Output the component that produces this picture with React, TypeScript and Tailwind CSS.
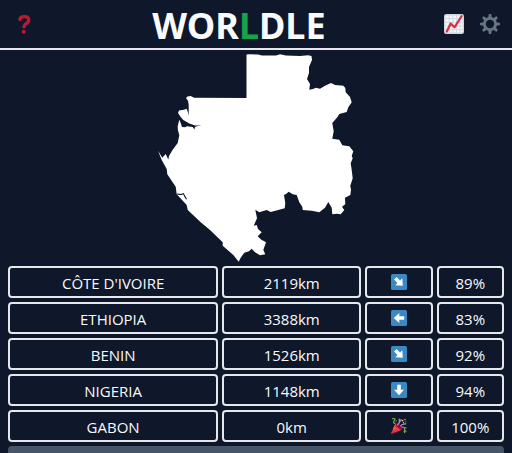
import React from "react";

type Hint = "southeast" | "west" | "south" | "found";

interface Guess {
  country: string;
  distance: string;
  hint: Hint;
  proximity: string;
}

const guesses: Guess[] = [
  { country: "CÔTE D'IVOIRE", distance: "2119km", hint: "southeast", proximity: "89%" },
  { country: "ETHIOPIA", distance: "3388km", hint: "west", proximity: "83%" },
  { country: "BENIN", distance: "1526km", hint: "southeast", proximity: "92%" },
  { country: "NIGERIA", distance: "1148km", hint: "south", proximity: "94%" },
  { country: "GABON", distance: "0km", hint: "found", proximity: "100%" },
];

const rotation = { south: 0, west: 90, southeast: -45 };

function QuestionIcon() {
  return (
    <svg viewBox="0 0 20 20" className="size-5" aria-hidden="true">
      <path
        d="M5.900 5.300C6.300 3.300 8 2.600 10.200 2.600c2.700 0 4.600 1.300 4.600 3.500 0 3.600-4.800 3.100-4.800 6.600"
        fill="none"
        stroke="#be1931"
        strokeWidth="3.400"
        strokeLinecap="round"
      />
      <circle cx="9.700" cy="17.700" r="2" fill="#be1931" />
    </svg>
  );
}

function ChartIcon() {
  return (
    <svg viewBox="0 0 36 36" className="size-5" aria-hidden="true">
      <rect width="36" height="36" rx="4" fill="#ccd6dd" />
      <rect x="2.5" y="2.5" width="31" height="31" rx="1" fill="#f5f8fa" />
      <path
        d="M9.500 2v32M16 2v32M22.500 2v32M29 2v32M2 8.500h32M2 15h32M2 21.500h32M2 28h32"
        stroke="#ccd6dd"
        strokeWidth="1.600"
      />
      <path
        d="M5 31.500L12 17l7 7L31.500 4"
        fill="none"
        stroke="#dd2e44"
        strokeWidth="4"
        strokeLinecap="round"
        strokeLinejoin="round"
      />
    </svg>
  );
}

function GearIcon() {
  return (
    <svg viewBox="0 0 20 20" className="size-5" fill="none" stroke="#66757f" aria-hidden="true">
      <circle cx="10" cy="10" r="5.600" strokeWidth="2.800" />
      {[0, 45, 90, 135, 180, 225, 270, 315].map((angle) => (
        <path
          key={angle}
          d="M8.200 3.900L8.700.6Q8.800 0 9.400 0h1.200q.6 0 .7.600l.5 3.300z"
          fill="#66757f"
          stroke="none"
          transform={`rotate(${angle} 10 10)`}
        />
      ))}
    </svg>
  );
}

function ArrowIcon({ angle, label }: { angle: number; label: string }) {
  return (
    <svg viewBox="0 0 16 16" className="size-4" role="img" aria-label={label}>
      <rect width="16" height="16" rx="1.500" fill="#3b88c3" />
      <path
        d="M6.200 2.800h3.600v4.900h3.200L8 13.300 3 7.700h3.200z"
        fill="#fff"
        transform={`rotate(${angle} 8 8)`}
      />
    </svg>
  );
}

function PartyIcon() {
  return (
    <svg viewBox="0 0 16 16" className="size-4" role="img" aria-label="found" fill="none">
      <path d="M4.800 4.800L0 15.200q.1.800.900.600L11.600 11.600z" fill="#dd2e44" />
      <path d="M4.600 6.500L2.200 11l3.200 3M3.400 8.800l5 3.700" stroke="#ea596e" strokeWidth="1" />
      <ellipse cx="8.100" cy="8.200" rx="1.700" ry="4.400" fill="#a0041e" transform="rotate(-43 8.100 8.200)" />
      <path d="M1.200.9C3.800-.2 4.600 1.200 3.300 2.700c-1 1.200-1 2 .8 2.900" stroke="#77b255" strokeWidth="1.200" />
      <path d="M6.300 7.200c2-1.300 2.800-3.100 1.800-6.400M8.500 4l2-2.600" stroke="#aa8dd8" strokeWidth="1.400" />
      <path d="M9.400 8.400c1-2 3-2.600 5.900-2.500" stroke="#aa8dd8" strokeWidth="1.200" />
      <path d="M10.500 9.300c2-.6 3.200-.2 3 1.700-.1 1.800.5 2.500 2.100 2M13.600 10.300l1.800-.8M12.800 13l1.200 2" stroke="#77b255" strokeWidth="1.200" />
      <g fill="#ffcc4d">
        <circle cx="11.600" cy="2.600" r=".9" />
        <circle cx="14" cy="1.500" r=".7" />
        <circle cx="12.500" cy="4.700" r=".7" />
        <circle cx="5.200" cy="3" r=".6" />
        <circle cx="3.800" cy="10.200" r=".5" />
      </g>
      <circle cx="14.800" cy="3.800" r=".7" fill="#5c913b" />
    </svg>
  );
}

const northEast =
  "246.5,54.5 250,54.3 258,54.5 262,55.5 276,55.5 280,54.2 286,55.5 300,56 308,55.3 311.5,56 312,60 309,67 309,73 307,79 310,84 309.3,89.7 313,89 316,87.7 320,88.7 325,85.7 331,83 335,85 343.3,85.7 345.3,88 345.7,92.3 350,97 351.7,102.3 348.3,107.3 346.7,112 339.3,114 337.3,117.3 332.3,123 333.7,131.3 332.3,138.7 339.3,139.7 342.3,145.3 349.3,146.3 353.3,151.3 351.7,156";
const southEast =
  "352.7,158.3 350.7,163.3 351.7,170 352.7,178.3 350.3,185.7 351,190 350.3,195 345,197.7 345.3,204.3 342,206.7 344.3,210 340.7,214.3 337,213.7 332.3,214.3 331.7,207.7 328.3,202 325,207.7 319.3,212.3 311.7,210.7 302.7,210 302.3,206.7 299.3,202.3 296.7,195 292.7,194.3 288.7,191.7 286,194 284,195 285.3,203.3 284.7,208.3 270.7,212 266.7,210 259.3,212.3 255.3,209.7 257,218.3 253.7,225.7 256.7,225 258,229 261.7,232.3 257.7,236.3 261,239.5 266,242.3 263.3,250 265.3,254.3 260,255.3 255,252.3 251.7,248.7";
const southWest =
  "249,251.3 244.3,252.7 240.7,257.7 238.7,261.7 233.3,255 222.7,245.7 222.7,242.3 210,230 200.7,222.3 187.7,210 186.7,205 176.7,194.3 175.7,186.7 167.3,174.3 166.7,169 161.7,160 158,150.7 162.3,157.7 165.7,154 168.3,159.5 169,156 172.7,149.7 177.7,143 179.3,135.3 177.9,130 177.7,126.3 179.3,119.7 180.7,123";
const northWest =
  "182,127 185,127.3 187,126.2 192.7,127 194.3,129.5 195,127 196.7,126.3 201.5,125.5 195,125.5 189.3,123.5 183.3,120 180.7,117 178,113 179,110.5 184,109.7 186.5,108.7 187.5,111 188.7,115 188.7,104.7 188,100.7 186,98 187.5,96.5 190.7,96 194,97.7 246.5,98";

function CountryShape() {
  return (
    <svg viewBox="156 50 200 212" className="h-[212px] w-[200px]" role="img" aria-label="Country outline">
      <polygon fill="#fff" points={`${northEast} ${southEast} ${southWest} ${northWest}`} />
      <path d="M177 194l4 .6 2.500-1 1 2.300 2 3.300" fill="none" stroke="#0f172a" strokeWidth="1.100" />
    </svg>
  );
}

const cell = "flex h-8 items-center justify-center rounded border-2 border-gray-200";
const textCell = `${cell} pt-0.5`;

export default function App() {
  return (
    <div className="flex h-screen flex-col overflow-hidden bg-[#0f172a] font-['Open_Sans','Noto_Sans',sans-serif] text-[15px] text-slate-50">
      <header className="flex h-[50px] shrink-0 items-center justify-between border-b-2 border-gray-200 pr-3 pl-3.5">
        <button type="button" aria-label="How to play">
          <QuestionIcon />
        </button>
        <h1 className="mt-1 font-['Noto_Sans',sans-serif] text-4xl leading-10 font-bold">
          WOR<span className="text-[#16a34a]">L</span>DLE
        </h1>
        <div className="flex gap-4">
          <button type="button" aria-label="Statistics">
            <ChartIcon />
          </button>
          <button type="button" aria-label="Settings">
            <GearIcon />
          </button>
        </div>
      </header>

      <main className="flex flex-col gap-1 px-2">
        <div className="flex justify-center">
          <CountryShape />
        </div>
        <ul className="flex flex-col gap-1">
          {guesses.map((guess) => (
            <li key={guess.country} className="grid grid-cols-7 gap-1">
              <div className={`${textCell} col-span-3`}>{guess.country}</div>
              <div className={`${textCell} col-span-2`}>{guess.distance}</div>
              <div className={cell}>
                {guess.hint === "found" ? (
                  <PartyIcon />
                ) : (
                  <ArrowIcon angle={rotation[guess.hint]} label={guess.hint} />
                )}
              </div>
              <div className={textCell}>{guess.proximity}</div>
            </li>
          ))}
        </ul>
        <button type="button" aria-label="Share" className="h-8 w-full shrink-0 rounded bg-[#475569]" />
      </main>
    </div>
  );
}
